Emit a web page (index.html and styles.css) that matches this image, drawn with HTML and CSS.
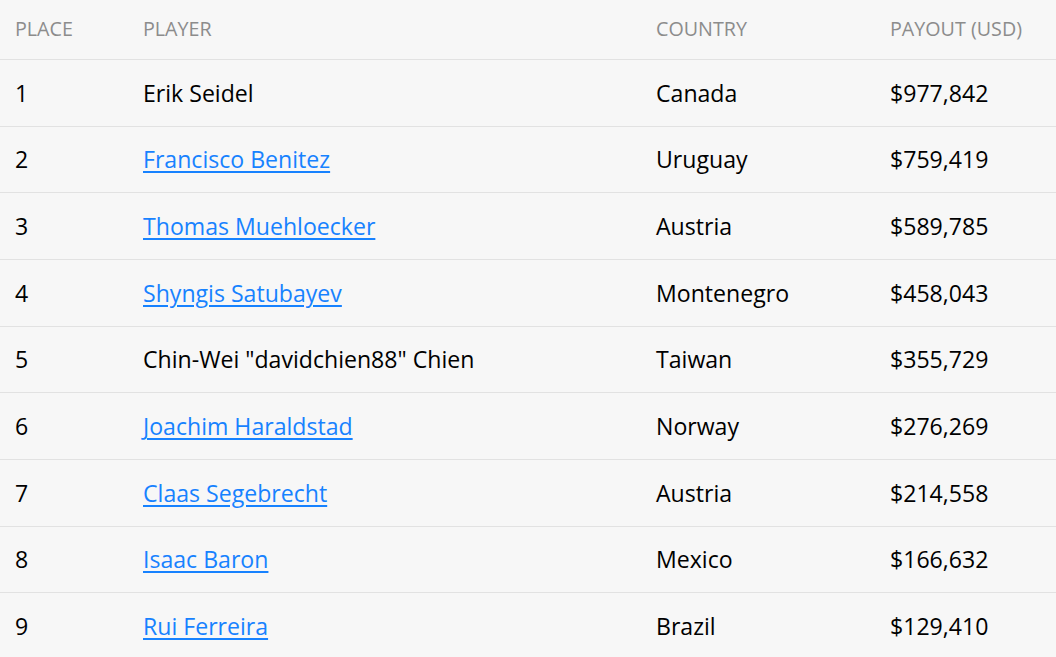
FILE: index.html
```html
<!DOCTYPE html>
<html>
<head>
<meta charset="utf-8">
<link rel="stylesheet" href="styles.css">
</head>
<body>
<table class="results">
  <thead>
    <tr>
      <th class="c-place">Place</th>
      <th class="c-player">Player</th>
      <th class="c-country">Country</th>
      <th class="c-payout">Payout (USD)</th>
    </tr>
  </thead>
  <tbody>
    <tr><td>1</td><td>Erik Seidel</td><td>Canada</td><td>$977,842</td></tr>
    <tr><td>2</td><td><a href="#">Francisco Benitez</a></td><td>Uruguay</td><td>$759,419</td></tr>
    <tr><td>3</td><td><a href="#">Thomas Muehloecker</a></td><td>Austria</td><td>$589,785</td></tr>
    <tr><td>4</td><td><a href="#">Shyngis Satubayev</a></td><td>Montenegro</td><td>$458,043</td></tr>
    <tr><td>5</td><td>Chin-Wei "davidchien88" Chien</td><td>Taiwan</td><td>$355,729</td></tr>
    <tr><td>6</td><td><a href="#">Joachim Haraldstad</a></td><td>Norway</td><td>$276,269</td></tr>
    <tr><td>7</td><td><a href="#">Claas Segebrecht</a></td><td>Austria</td><td>$214,558</td></tr>
    <tr><td>8</td><td><a href="#">Isaac Baron</a></td><td>Mexico</td><td>$166,632</td></tr>
    <tr><td>9</td><td><a href="#">Rui Ferreira</a></td><td>Brazil</td><td>$129,410</td></tr>
  </tbody>
</table>
</body>
</html>
```
FILE: styles.css
```css
html, body {
  margin: 0;
  padding: 0;
  background: #f7f7f7;
}
body {
  font-family: "Open Sans", "Liberation Sans", sans-serif;
  color: #000;
}
.results {
  width: 1056px;
  border-collapse: collapse;
  table-layout: fixed;
}
.results th {
  font-size: 19.7px;
  font-weight: 400;
  text-transform: uppercase;
  color: #8c8c8c;
  text-align: left;
  height: 57px;
  padding: 0 15px 2px;
  border-bottom: 1px solid #e2e2e2;
  vertical-align: middle;
}
.c-place { width: 98px; }
.c-player { width: 483px; }
.c-country { width: 204px; }
.results td {
  font-size: 23.1px;
  height: 65.67px;
  padding: 0 15px;
  border-bottom: 1px solid #e2e2e2;
  vertical-align: middle;
  white-space: nowrap;
}
.results a {
  color: #1782ff;
  text-decoration: underline;
  text-underline-offset: 3px;
  text-decoration-thickness: 2px;
}
```
